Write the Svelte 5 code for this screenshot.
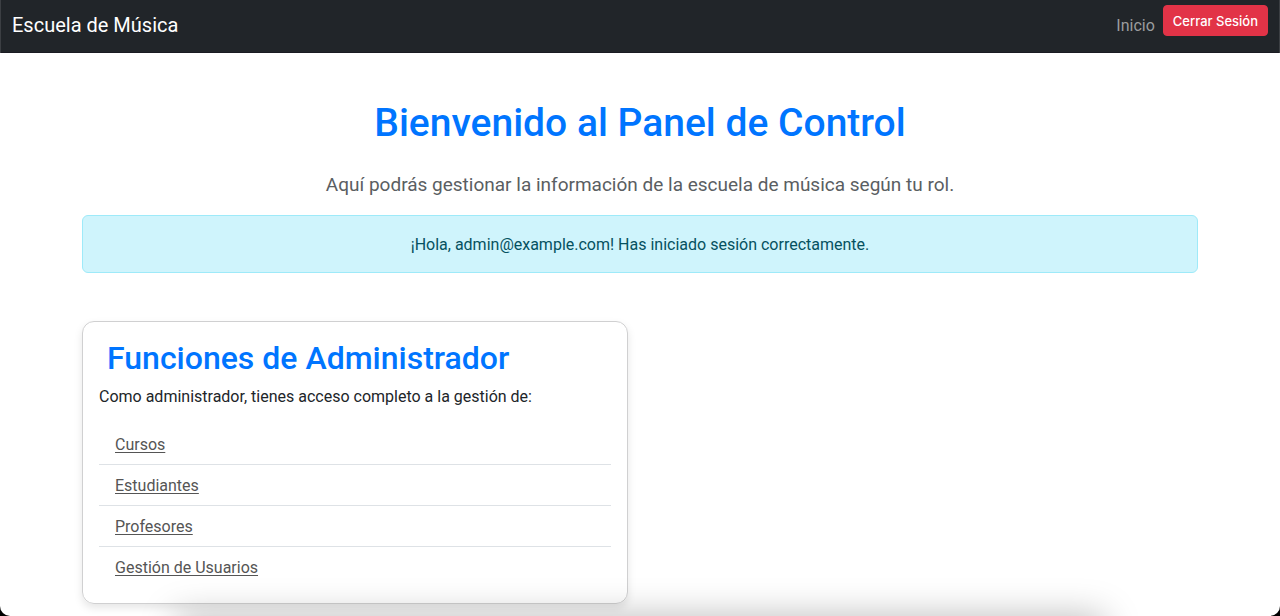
<svelte:head>
  <title>Escuela de Música</title>
</svelte:head>

<script>
  const links = ['Cursos', 'Estudiantes', 'Profesores', 'Gestión de Usuarios'];
</script>

<div class="page">
  <nav>
    <a class="brand" href="#inicio">Escuela de Música</a>
    <div class="actions">
      <a class="nav-link" href="#inicio">Inicio</a>
      <button type="button">Cerrar Sesión</button>
    </div>
  </nav>
  <main>
    <h1>Bienvenido al Panel de Control</h1>
    <p class="lead">Aquí podrás gestionar la información de la escuela de música según tu rol.</p>
    <div class="alert" role="status">¡Hola, admin@example.com! Has iniciado sesión correctamente.</div>
    <div class="row">
      <section class="card">
        <h2>Funciones de Administrador</h2>
        <p>Como administrador, tienes acceso completo a la gestión de:</p>
        <ul>
          {#each links as link}
            <li><a href="#{link}">{link}</a></li>
          {/each}
        </ul>
      </section>
    </div>
  </main>
  <div class="shade"></div>
</div>

<style>
  :global(body) { margin: 0; background: #000; }
  :global(*) { box-sizing: border-box; }
  .page {
    position: relative;
    min-height: 100vh;
    overflow: hidden;
    background: #fff;
    border-radius: 0 0 10px 10px;
    font: 16px/24px Roboto, "Liberation Sans", sans-serif;
    color: #212529;
  }
  nav {
    display: flex;
    justify-content: space-between;
    align-items: flex-start;
    padding: 5px 11px 7px;
    border: solid #3c3f43;
    border-width: 0 1px;
    box-shadow: inset 0 -1px #1a1b22;
    background: #212529;
  }
  .brand { padding: 5px 0 6px; font-size: 20px; line-height: 30px; color: #fff; text-decoration: none; }
  .actions { display: flex; gap: 8px; }
  .nav-link { padding: 9px 0 7px; color: #9b9d9e; text-decoration: none; }
  button {
    align-self: flex-start;
    padding: 5px 9px 3px;
    border: 1px solid #e23347;
    border-radius: 4px;
    background: #e23347;
    color: #fff;
    font: 500 13px/21px Inter, "Liberation Sans", sans-serif;
  }
  main { padding: 46px 82px 12px; }
  h1 { margin: 0 0 23px; font-size: 39px; line-height: 48px; font-weight: 500; text-align: center; color: #0075ff; }
  .lead { margin: 0 0 16px; font-size: 19px; line-height: 29px; text-align: center; color: #5a5e62; }
  .alert {
    padding: 17px 16px 15px;
    border: 1px solid #9eeaf9;
    border-radius: 6px;
    background: #cff4fc;
    color: #055160;
    text-align: center;
  }
  .row { display: grid; grid-template-columns: 1fr 1fr; gap: 24px; margin-top: 48px; }
  .card { padding: 16px; border: 1px solid #d0d0d1; border-radius: 12px; box-shadow: 0 4px 8px rgba(0, 0, 0, 0.1); }
  h2 { margin: 0 0 7px 8px; font-size: 32px; line-height: 40px; font-weight: 500; color: #0075ff; }
  .card p { margin: 0 0 15px; }
  ul { margin: 0; padding: 0; list-style: none; }
  li { padding: 9px 16px 7px; border-bottom: 1px solid #dee2e6; }
  li:last-child { border-bottom: 0; }
  li a { color: #555; text-underline-offset: 2px; text-decoration-thickness: 1px; }
  .shade {
    position: absolute;
    left: 176px;
    right: 176px;
    bottom: -80px;
    height: 80px;
    box-shadow: 0 0 36px rgba(0, 0, 0, 0.27);
  }
</style>
